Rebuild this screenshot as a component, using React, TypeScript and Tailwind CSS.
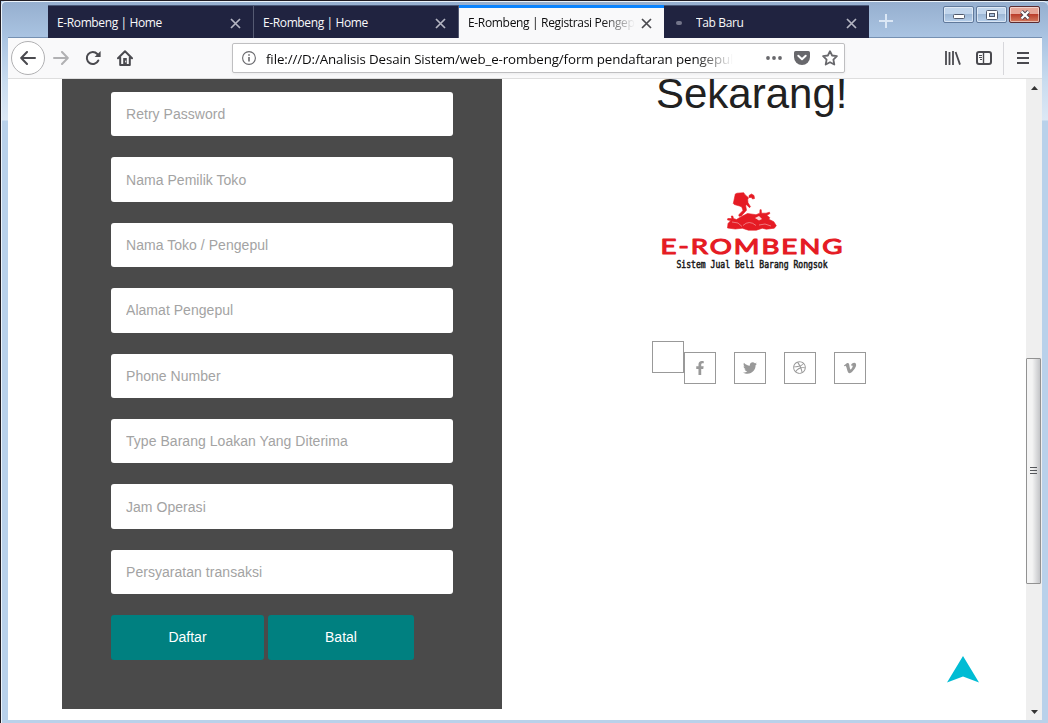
import React from "react";
import { FaDribbble, FaFacebookF, FaTwitter, FaVimeoV } from "react-icons/fa";

const fields = [
  "Retry Password",
  "Nama Pemilik Toko",
  "Nama Toko / Pengepul",
  "Alamat Pengepul",
  "Phone Number",
  "Type Barang Loakan Yang Diterima",
  "Jam Operasi",
  "Persyaratan transaksi",
];

function Cross({ className }: { className: string }) {
  return (
    <svg className={`shrink-0 ${className}`} width="11" height="11" viewBox="0 0 11 11" fill="none" stroke="currentColor" strokeWidth="1.7">
      <path d="M1 1l9 9M10 1l-9 9" />
    </svg>
  );
}

function Tab({ title, active, loading, first, last }: { title: string; active?: boolean; loading?: boolean; first?: boolean; last?: boolean }) {
  return (
    <div
      className={`flex h-[33px] shrink-0 items-center pr-3 pl-[9px] ${first ? "w-[206px]" : "w-[205px]"} ${
        active ? "border-t-[3px] border-[#0a84ff] bg-[#f9f9fa] text-[#0c0c0d]" : "border-t border-[#4b5a7a] bg-[#202340] pt-[2px] text-[#f9f9fa]"
      } ${!active && !last ? "border-r border-r-[#555a72]" : ""}`}
    >
      {loading && <span className="mr-[14px] ml-[3px] h-1 w-[6px] shrink-0 rounded-full bg-[#73758a]" />}
      <span
        className={`min-w-0 flex-1 overflow-hidden text-[12px] leading-4 whitespace-nowrap ${
          active ? "tracking-[-0.33px] [mask-image:linear-gradient(to_right,black_80%,transparent_100%)]" : loading ? "tracking-[-0.35px]" : "tracking-[-0.38px]"
        }`}
      >
        {title}
      </span>
      <Cross className={active ? "ml-[6px] text-[#4a4a4f]" : "text-[#b4b5c2]"} />
    </div>
  );
}

function WindowButton({ close, children }: { close?: boolean; children: React.ReactNode }) {
  return (
    <div
      className={`flex h-[17px] w-[31px] items-center justify-center rounded-[2px] border shadow-[inset_0_0_0_1px_rgba(255,255,255,0.5)] ${
        close
          ? "border-[#5b2b31] bg-linear-to-b from-[#e6a597] from-45% via-[#bb3e2c] via-50% to-[#d27a5f]"
          : "border-[#60799b] bg-linear-to-b from-[#c1d5ec] from-45% via-[#9eb8d6] via-50% to-[#b6cfeb]"
      }`}
    >
      {children}
    </div>
  );
}

function TitleBar() {
  return (
    <div className="flex h-[33px] shrink-0">
      <div className="w-10 border-b border-[#7590b2]" />
      <Tab title="E-Rombeng | Home" first />
      <Tab title="E-Rombeng | Home" />
      <Tab title="E-Rombeng | Registrasi Pengepul" active />
      <Tab title="Tab Baru" loading last />
      <div className="flex flex-1 items-start border-b border-[#7590b2] pl-[10px]">
        <svg className="mt-[9px]" width="14" height="14" viewBox="0 0 14 14" stroke="#dbe7f5" strokeWidth="2">
          <path d="M7 0v14M0 7h14" />
        </svg>
        <div className="mt-[1px] mr-[2px] ml-auto flex gap-[2px]">
          <WindowButton>
            <svg className="mt-[3px]" width="12" height="5" viewBox="0 0 12 5"><rect x=".5" y=".5" width="11" height="4" rx="1" fill="#fff" stroke="#51596b" /></svg>
          </WindowButton>
          <WindowButton>
            <svg width="12" height="10" viewBox="0 0 12 10"><rect x=".5" y=".5" width="11" height="9" rx="1" fill="#fff" stroke="#51596b" /><rect x="3.5" y="3.5" width="5" height="3" fill="#a9c0dc" stroke="#51596b" /></svg>
          </WindowButton>
          <WindowButton close>
            <svg width="12" height="10" viewBox="0 0 12 10"><path d="M2.5 1.5l7 7M9.5 1.5l-7 7" stroke="#50424f" strokeWidth="4" /><path d="M2.5 1.5l7 7M9.5 1.5l-7 7" stroke="#fff" strokeWidth="2.2" /></svg>
          </WindowButton>
        </div>
      </div>
    </div>
  );
}

function NavBar() {
  return (
    <div className="flex h-[41px] shrink-0 items-center border-b border-[#dedede] bg-[#f9f9fa] pl-[3px] text-[#4a4a4f]">
      <div className="flex size-[34px] items-center justify-center rounded-full border border-[#b1b1b3] bg-white">
        <svg width="16" height="14" viewBox="0 0 16 14" fill="none" stroke="currentColor" strokeWidth="2" strokeLinecap="round" strokeLinejoin="round"><path d="M15 7H1.5M7 1L1.2 7 7 13" /></svg>
      </div>
      <svg className="ml-2" width="16" height="14" viewBox="0 0 16 14" fill="none" stroke="#b1b1b3" strokeWidth="2" strokeLinecap="round" strokeLinejoin="round"><path d="M1 7h13.5M9 1l5.8 6L9 13" /></svg>
      <svg className="ml-4" width="16" height="16" viewBox="0 0 16 16" fill="none" stroke="currentColor" strokeWidth="2"><path d="M13.3 10.5A6 6 0 1 1 12.3 4" strokeLinecap="round" /><path d="M15.6 1v6H9.6z" fill="currentColor" stroke="none" /></svg>
      <svg className="ml-4" width="16" height="16" viewBox="0 0 16 16" fill="none" stroke="currentColor" strokeWidth="2" strokeLinejoin="round" strokeLinecap="round"><path d="M1 8.2L8 1.3l7 6.9M3.2 7.5V15h9.6V7.5" /><path d="M6.2 8h3.6v7H6.2z" fill="currentColor" stroke="none" /><path d="M8.7 11v1" stroke="#f9f9fa" strokeWidth="1" /></svg>
      <div className="ml-[99px] flex h-[30px] w-[613px] items-center rounded-[2px] border border-[#bfbfc1] bg-white pl-[9px] text-[#68686c] shadow-[0_1px_3px_rgba(0,0,0,0.06)]">
        <svg className="shrink-0" width="14" height="14" viewBox="0 0 14 14" fill="none" stroke="currentColor"><circle cx="7" cy="7" r="6.4" strokeWidth="1.1" /><path d="M7 6v4.5M7 3.2v1.6" strokeWidth="1.6" /></svg>
        <span className="mt-[2px] ml-[10px] w-[467px] shrink-0 overflow-hidden text-[13.33px] leading-5 tracking-[-0.11px] whitespace-nowrap text-[#0c0c0d] [mask-image:linear-gradient(to_right,black_92%,transparent_100%)]">
          file:///D:/Analisis Desain Sistem/web_e-rombeng/form pendaftaran pengepul.html
        </span>
        <svg className="ml-[33px] shrink-0" width="16" height="4" viewBox="0 0 16 4" fill="currentColor"><circle cx="2" cy="2" r="1.9" /><circle cx="8" cy="2" r="1.9" /><circle cx="14" cy="2" r="1.9" /></svg>
        <svg className="ml-3 shrink-0" width="16" height="14" viewBox="0 0 16 14"><path d="M1.6 0h12.8Q16 0 16 1.6V6A8 8 0 0 1 0 6V1.6Q0 0 1.6 0z" fill="currentColor" /><path d="M4.3 4.8L8 8.3l3.7-3.5" fill="none" stroke="#fff" strokeWidth="2" strokeLinecap="round" strokeLinejoin="round" /></svg>
        <svg className="ml-3 shrink-0" width="16" height="16" viewBox="0 0 16 16" fill="none" stroke="currentColor" strokeWidth="1.8" strokeLinejoin="round"><path d="M8 1.2l2.1 4.3 4.8.7-3.5 3.4.9 4.9L8 12.2l-4.3 2.3.9-4.9L1.1 6.2l4.8-.7z" /></svg>
      </div>
      <svg className="ml-[100px]" width="16" height="14" viewBox="0 0 16 14" fill="none" stroke="currentColor" strokeWidth="1.8"><path d="M1 0v14M4.5 1v13M8 0v14M10.6 1L15 13.6" /></svg>
      <svg className="ml-[15px]" width="16" height="14" viewBox="0 0 16 14" fill="none" stroke="currentColor"><rect x="1" y="1" width="14" height="12" rx="2" strokeWidth="2" /><path d="M7.5 1v12" strokeWidth="1.4" /><path d="M3 4.5h3M3 6.5h3M4 8.5h2" /></svg>
      <div className="ml-[11px] h-[33px] w-px bg-[#d7d7db]" />
      <svg className="ml-[13px]" width="12" height="12" viewBox="0 0 12 12" stroke="currentColor" strokeWidth="2"><path d="M0 1h12M0 6h12M0 11h12" /></svg>
    </div>
  );
}

function Logo() {
  return (
    <svg className="mt-[71px] ml-[3px]" width="195" height="90" viewBox="0 0 195 90">
      <g fill="#e51b24" stroke="#e51b24" strokeWidth=".6" strokeLinejoin="round">
        <path d="M80.300 9l1.700-.8 6.700-.5 1.300 2 3.500 3-.8 2 .3 3 2.500 4-1 1-3-3-.8 1 .8 4.500-5.200 5.800-2.300.2-.2-1.500 4.200-4.200-1.200-3.500-2.300-1-5.200-1.500-1-1z" />
        <path d="M94 10.500l2.500-1.500 2.500 1.500.5 3-2 .5-1-1.500-2.500 0z" />
        <path d="M72.500 43l.5-4.500 2.800-3-3.300-.5.3-1.500 4 0-.5-2.500 1.500 0 .7 2.500 3 1 5-3 6-3 8.500 1.200 3.800-1.500.2-3.500 1.200 0 .3 3.500 4.500 0 3.500-1 .3 1.500-3 1.500 3 2.500-1 1.500 5 2.500 2.500 4-2 2.500-8 1-4-1-6 2-8 0-6-2-7 .8z" />
      </g>
      <g fill="none" stroke="#fff" strokeWidth=".4">
        <path d="M77 37l6 1 4 3.500M88 40.500q6-6 13 0M104 40l6-1 6 2" />
      </g>
      <path d="M100 33l4-2 3 3-3 1.500z" fill="#fbd4d5" />
      <text
        x="5.500"
        y="68.500"
        textLength="184"
        lengthAdjust="spacingAndGlyphs"
        fill="#e51b24"
        stroke="#e51b24"
        strokeWidth="1.1"
        strokeLinejoin="round"
        className="font-['Lato',sans-serif] text-[21px] tracking-[1.5px]"
      >
        E-ROMBENG
      </text>
      <text x="21.5" y="83" textLength="151" lengthAdjust="spacingAndGlyphs" fill="#171717" stroke="#171717" strokeWidth=".5" className="font-['DejaVu_Sans_Mono',monospace] text-[10.500px]">Sistem Jual Beli Barang Rongsok</text>
    </svg>
  );
}

function Page() {
  const box = "flex size-8 items-center justify-center border border-[#999] pr-[1px] pb-[1px] text-[#999]";
  return (
    <div className="flex min-w-0 flex-1 items-start overflow-hidden bg-white font-['Liberation_Sans',Arial,sans-serif]">
      <form className="ml-[54px] flex h-[630px] w-[440px] shrink-0 flex-col gap-[21px] bg-[#4a4a4a] px-[49px] pt-[13px]">
        {fields.map((label) => (
          <input
            key={label}
            placeholder={label}
            className="h-[44.4px] w-[342px] shrink-0 rounded-[3px] bg-white px-[15px] text-[14px] tracking-[0.04px] placeholder:text-[#a3a3a3]"
          />
        ))}
        <div className="flex gap-1 text-[14px] text-white">
          <button type="button" className="h-[44.4px] w-[153px] rounded-[3px] bg-[#008080]">Daftar</button>
          <button type="button" className="h-[44.4px] w-[146px] rounded-[3px] bg-[#008080]">Batal</button>
        </div>
      </form>
      <div className="flex flex-col items-start pl-[150px]">
        <h1 className="-mt-[6px] ml-1 text-[42px] leading-[42px] text-[#212121]">Sekarang!</h1>
        <div className="-mt-[1px]">
          <Logo />
        </div>
        <div className="mt-[66px] flex items-start">
          <div className={box} />
          <div className="mt-[11px] flex gap-[18px]">
            <div className={box}><FaFacebookF size={14} /></div>
            <div className={box}><FaTwitter size={14} /></div>
            <div className={box}><FaDribbble size={13} /></div>
            <div className={box}><FaVimeoV size={14} /></div>
          </div>
        </div>
      </div>
    </div>
  );
}

function ScrollBar() {
  return (
    <div className="flex w-4 shrink-0 flex-col items-center bg-[#efefef]">
      <svg className="mt-[7px]" width="7" height="4" viewBox="0 0 7 4"><path d="M3.5 0L7 4H0z" fill="#333" /></svg>
      <div className="mt-[268px] mr-[1px] flex h-[226px] w-[15px] items-center justify-center rounded-[1px] border border-[#929292] bg-linear-to-r from-[#f4f4f4] from-40% to-[#c4c5c8]">
        <svg width="7" height="8" viewBox="0 0 7 8" stroke="#55575b"><path d="M0 .5h7M0 3.5h7M0 6.5h7" /></svg>
      </div>
      <svg className="mt-auto mb-[6px]" width="7" height="4" viewBox="0 0 7 4"><path d="M0 0h7L3.500 4z" fill="#333" /></svg>
    </div>
  );
}

export default function App() {
  return (
    <div className="relative flex h-[723px] w-[1048px] flex-col overflow-hidden border-t border-l border-[#211d23] bg-[#b9d1ea] font-['Open_Sans','Noto_Sans',sans-serif]">
      <div className="flex min-h-0 flex-1 flex-col rounded-tl-[5px] rounded-tr-[5px] border-t border-l border-[#edf4fb] bg-[linear-gradient(#96afcf_0px,#aac4e2_36px,#c9dcef_80px,#dce8f5_118px,#b9d1ea_119px)] pt-[3px] pr-[6px] pb-[3px] pl-[6px]">
        <TitleBar />
        <NavBar />
        <div className="flex min-h-0 flex-1">
          <Page />
          <ScrollBar />
        </div>
      </div>
      <svg className="absolute top-[655px] left-[946px]" width="32" height="27" viewBox="0 0 32 27"><path d="M16 0l16 26.500-16-6-16 6z" fill="#00bcd4" /></svg>
    </div>
  );
}
